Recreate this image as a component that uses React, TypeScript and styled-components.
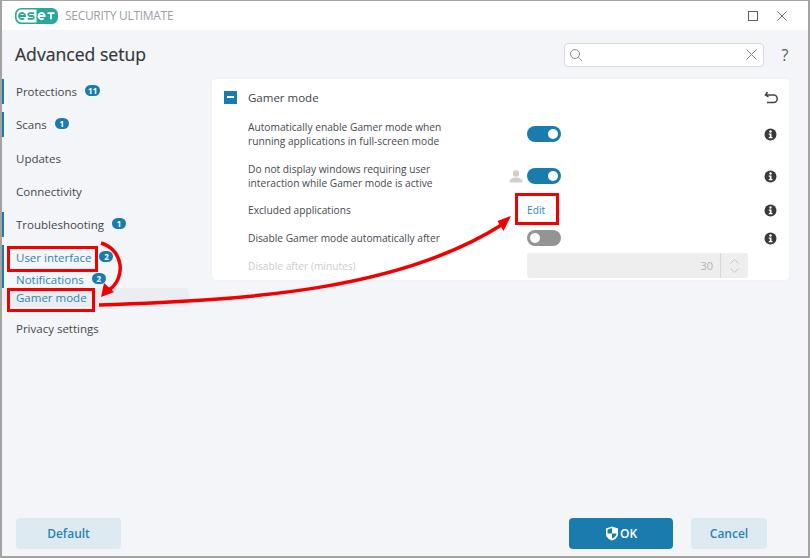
import React from "react";
import styled, { createGlobalStyle } from "styled-components";

const Global = createGlobalStyle`
  html, body { margin: 0; padding: 0; background: #fff; }
  * { box-sizing: border-box; }
`;

const Win = styled.div`
  position: relative;
  width: 810px;
  height: 558px;
  overflow: hidden;
  display: flex;
  flex-direction: column;
  background: #f3f5f8;
  border: 1px solid #a3a3a3;
  border-left-width: 2px;
  border-bottom-width: 2px;
  border-right-width: 2px;
  font-family: "Open Sans", "Noto Sans", sans-serif;
  color: #3d4147;
`;
const TitleBar = styled.header`
  height: 29px;
  flex: none;
  background: #fff;
  display: flex;
  align-items: center;
  padding: 0 21px 0 13px;
  gap: 6px;
`;
const Product = styled.span`
  font-size: 12px;
  color: #9aa0a4;
  letter-spacing: -0.3px;
  flex: 1;
`;
const WinButtons = styled.div`
  display: flex;
  align-items: center;
  gap: 19px;
`;
const HeadRow = styled.div`
  height: 49px;
  flex: none;
  display: flex;
  align-items: center;
  padding: 0 14px 0 13px;
`;
const Title = styled.h1`
  margin: 0 0 2px;
  flex: 1;
  font-size: 17.6px;
  font-weight: 400;
  color: #32363b;
  -webkit-text-stroke: 0.2px #32363b;
`;
const Search = styled.div`
  width: 200px;
  height: 24px;
  background: #fff;
  border: 1px solid #d6d9dc;
  border-radius: 4px;
  display: flex;
  align-items: center;
  justify-content: space-between;
  padding: 0 6px 0 4px;
  margin-right: 12px;
`;
const Help = styled.span`
  font-size: 16px;
  color: #55595e;
  width: 18px;
  text-align: center;
`;
const Body = styled.div`
  flex: 1;
  display: flex;
  align-items: flex-start;
  min-height: 0;
`;
const Nav = styled.nav`
  width: 187px;
  margin-right: 23px;
  flex: none;
  display: flex;
  flex-direction: column;
`;
const NavGroup = styled.div<{ $accent?: boolean }>`
  display: flex;
  flex-direction: column;
  border-left: 2px solid ${(p) => (p.$accent ? "#1a7cae" : "transparent")};
  margin-bottom: 8.3px;
`;
const SubGroup = styled(NavGroup)`
  margin-bottom: 0;
`;
const NavItem = styled.div<{ $blue?: boolean; $h?: number }>`
  height: ${(p) => p.$h ?? 25}px;
  display: flex;
  align-items: center;
  gap: 8px;
  padding-left: 12px;
  font-size: 11.5px;
  font-weight: 500;
  color: ${(p) => (p.$blue ? "#2b85b4" : "#43474d")};
`;
const ActiveItem = styled(NavItem)`
  height: 19px;
  margin-bottom: 9px;
  padding-left: 14px;
  border-radius: 4px;
  background: #ecedf0;
`;
const Badge = styled.span`
  display: inline-flex;
  align-items: center;
  justify-content: center;
  min-width: 14px;
  height: 11px;
  padding: 0 3px;
  margin-top: -2px;
  border-radius: 6px;
  background: #1a7cae;
  color: #fff;
  font-size: 8px;
  font-weight: 700;
`;
const Panel = styled.section`
  width: 577px;
  height: 201px;
  background: #fff;
  border-radius: 4px;
  box-shadow: 0 0 3px rgba(0, 0, 0, 0.04);
  padding: 0 10px 0 12px;
  display: flex;
  flex-direction: column;
`;
const PanelHead = styled.div`
  height: 36px;
  flex: none;
  display: flex;
  align-items: center;
`;
const Collapse = styled.span`
  width: 13px;
  height: 13px;
  background: #1a7cae;
  display: flex;
  align-items: center;
  justify-content: center;
  margin-right: 11px;
  &::after {
    content: "";
    width: 7px;
    height: 2px;
    background: #fff;
  }
`;
const PanelTitle = styled.span`
  flex: 1;
  font-size: 11.5px;
  font-weight: 500;
  color: #3d4147;
`;
const Row = styled.div<{ $h: number; $top?: number }>`
  height: ${(p) => p.$h}px;
  margin-top: ${(p) => p.$top ?? 0}px;
  flex: none;
  display: grid;
  grid-template-columns: 279px 221px 1fr;
  padding-left: 24px;
  align-items: center;
`;
const Label = styled.div<{ $muted?: boolean }>`
  font-size: 10.2px;
  line-height: 14px;
  color: ${(p) => (p.$muted ? "#c9cbce" : "#45494f")};
`;
const Control = styled.div`
  position: relative;
  display: flex;
  align-items: center;
`;
const Toggle = styled.span<{ $on: boolean }>`
  width: 34px;
  height: 16px;
  border-radius: 8px;
  background: ${(p) => (p.$on ? "#1a7cae" : "#949494")};
  display: flex;
  align-items: center;
  justify-content: ${(p) => (p.$on ? "flex-end" : "flex-start")};
  padding: 0 3px;
  &::after {
    content: "";
    width: 10px;
    height: 10px;
    border-radius: 50%;
    background: #fff;
  }
`;
const UserMark = styled.span`
  position: absolute;
  left: -18px;
  top: 2px;
  display: flex;
`;
const EditLink = styled.span`
  font-size: 10.2px;
  color: #2b85b4;
`;
const InfoSlot = styled.div`
  display: flex;
  justify-content: flex-end;
  padding-right: 2px;
`;
const Spin = styled.div`
  width: 221px;
  height: 25px;
  border-radius: 3px;
  background: #eeeeee;
  display: flex;
  align-items: center;
  justify-content: flex-end;
  font-size: 11px;
  color: #b3b3b3;
`;
const SpinArrows = styled.div`
  width: 28px;
  height: 25px;
  margin-left: 7px;
  border-left: 1px solid #d8d8d8;
  display: flex;
  flex-direction: column;
  align-items: center;
  justify-content: center;
  gap: 4px;
`;
const Footer = styled.footer`
  height: 31px;
  margin-bottom: 7px;
  flex: none;
  display: flex;
  align-items: flex-start;
  padding-left: 14px;
  gap: 18px;
`;
const Btn = styled.button<{ $primary?: boolean; $w: number }>`
  width: ${(p) => p.$w}px;
  height: 31px;
  border: 0;
  border-radius: 4px;
  background: ${(p) => (p.$primary ? "#1a7cae" : "#deeaf1")};
  color: ${(p) => (p.$primary ? "#fff" : "#2b85b4")};
  font-family: inherit;
  font-size: 12px;
  font-weight: 600;
  display: flex;
  align-items: center;
  justify-content: center;
  gap: 1px;
  padding: 0;
`;
const Spacer = styled.div`
  width: 412px;
`;
const Overlay = styled.svg`
  position: absolute;
  left: -2px;
  top: -1px;
  pointer-events: none;
`;

const Info = () => (
  <svg width="13" height="13" viewBox="0 0 13 13">
    <circle cx="6.5" cy="6.5" r="6" fill="#3a3a3a" />
    <circle cx="6.5" cy="3.5" r="1.2" fill="#fff" />
    <path d="M4.8 5.5h2.7v3.6h1v1.2H4.8V9.1h1V6.7h-1z" fill="#fff" />
  </svg>
);

const Logo = () => (
  <svg width="44" height="16" viewBox="0 0 44 16" role="img">
    <rect x="0.8" y="0.8" width="41.400" height="14.400" rx="5.500" fill="#fff" stroke="#2aa79b" strokeWidth="1.600" />
    <path d="M21.500 0.800H36.700a5.500 5.500 0 0 1 5.500 5.500v3.400a5.500 5.500 0 0 1-5.500 5.500H21.500z" fill="#2aa79b" />
    <g fill="none" strokeWidth="1.800" strokeLinecap="butt">
      <path stroke="#2aa79b" d="M4 8h6.200a3.100 3.100 0 1 0-1 2.400" />
      <path stroke="#2aa79b" d="M19.200 5.200h-4.500a1.400 1.400 0 0 0 0 2.800h2.700a1.400 1.400 0 0 1 0 2.800h-4.700" />
      <path stroke="#fff" d="M23.500 8h6.200a3.100 3.100 0 1 0-1 2.400" />
      <path stroke="#fff" d="M32.500 5.200h7M36 5.200v6" />
    </g>
  </svg>
);

const Arrows = () => (
  <Overlay width="810" height="558" viewBox="0 0 810 558" fill="none">
    <g stroke="#f00000" strokeWidth="3" fill="none">
      <rect x="8.500" y="247.500" width="88" height="23" />
      <rect x="8.500" y="289.500" width="85" height="21" />
      <rect x="516.500" y="194.500" width="41" height="29" />
    </g>
    <path d="M101 243C124 250 126 278 109 290" stroke="#f00000" strokeWidth="3.500" />
    <path d="M101 297l3-14 10 9z" fill="#f00000" />
    <path d="M99 305C250 300 400 290 503 224" stroke="#f00000" strokeWidth="3.500" />
    <path d="M511 216l-7.500 15-6-10z" fill="#f00000" />
  </Overlay>
);

export default function App() {
  return (
    <Win>
      <Global />
      <TitleBar>
        <Logo />
        <Product>SECURITY ULTIMATE</Product>
        <WinButtons>
          <svg width="10" height="10" viewBox="0 0 10 10" fill="none" stroke="#5f5f5f">
            <rect x="0.500" y="0.500" width="9" height="9" />
          </svg>
          <svg width="10" height="10" viewBox="0 0 10 10" fill="none" stroke="#6a6a6a">
            <path d="M0.500 0.500l9 9M9.500 0.500l-9 9" />
          </svg>
        </WinButtons>
      </TitleBar>
      <HeadRow>
        <Title>Advanced setup</Title>
        <Search>
          <svg width="14" height="14" viewBox="0 0 14 14" fill="none" stroke="#8a8a8a" strokeWidth="1">
            <circle cx="6" cy="6" r="4.500" />
            <path d="M9.300 9.300L13 13" />
          </svg>
          <svg width="11" height="11" viewBox="0 0 11 11" fill="none" stroke="#7d7d7d">
            <path d="M0.500 0.500l10 10M10.500 0.500l-10 10" />
          </svg>
        </Search>
        <Help>?</Help>
      </HeadRow>
      <Body>
        <Nav>
          <NavGroup $accent>
            <NavItem>Protections <Badge>11</Badge></NavItem>
          </NavGroup>
          <NavGroup $accent>
            <NavItem>Scans <Badge>1</Badge></NavItem>
          </NavGroup>
          <NavGroup>
            <NavItem>Updates</NavItem>
          </NavGroup>
          <NavGroup>
            <NavItem>Connectivity</NavItem>
          </NavGroup>
          <NavGroup $accent>
            <NavItem>Troubleshooting <Badge>1</Badge></NavItem>
          </NavGroup>
          <SubGroup $accent>
            <NavItem $blue>User interface <Badge>2</Badge></NavItem>
            <NavItem $blue $h={18}>Notifications <Badge>2</Badge></NavItem>
          </SubGroup>
          <ActiveItem $blue>Gamer mode</ActiveItem>
          <NavGroup>
            <NavItem>Privacy settings</NavItem>
          </NavGroup>
        </Nav>
        <Panel>
          <PanelHead>
            <Collapse />
            <PanelTitle>Gamer mode</PanelTitle>
            <svg width="15" height="15" viewBox="0 0 15 15" fill="none" stroke="#3a4450" strokeWidth="1.500">
              <path d="M3.500 2L1.500 5l3 2M2 5h7.500a3.700 3.700 0 0 1 0 7.500H3" />
            </svg>
          </PanelHead>
          <Row $h={28} $top={5}>
            <Label>Automatically enable Gamer mode when<br />running applications in full-screen mode</Label>
            <Control><Toggle $on /></Control>
            <InfoSlot><Info /></InfoSlot>
          </Row>
          <Row $h={28} $top={14}>
            <Label>Do not display windows requiring user<br />interaction while Gamer mode is active</Label>
            <Control>
              <UserMark>
                <svg width="14" height="13" viewBox="0 0 14 13" fill="#cfcfcf">
                  <circle cx="7" cy="3.500" r="3.200" />
                  <path d="M0.500 12.500c0-3.500 2.500-5 6.500-5s6.500 1.500 6.500 5z" />
                </svg>
              </UserMark>
              <Toggle $on />
            </Control>
            <InfoSlot><Info /></InfoSlot>
          </Row>
          <Row $h={20} $top={10}>
            <Label>Excluded applications</Label>
            <Control><EditLink>Edit</EditLink></Control>
            <InfoSlot><Info /></InfoSlot>
          </Row>
          <Row $h={20} $top={8}>
            <Label>Disable Gamer mode automatically after</Label>
            <Control><Toggle $on={false} /></Control>
            <InfoSlot><Info /></InfoSlot>
          </Row>
          <Row $h={25} $top={5}>
            <Label $muted>Disable after (minutes)</Label>
            <Control>
              <Spin>
                30
                <SpinArrows>
                  <svg width="9" height="5" viewBox="0 0 9 5" fill="none" stroke="#c4c4c4"><path d="M0.500 4.500l4-4 4 4" /></svg>
                  <svg width="9" height="5" viewBox="0 0 9 5" fill="none" stroke="#c4c4c4"><path d="M0.500 0.500l4 4 4-4" /></svg>
                </SpinArrows>
              </Spin>
            </Control>
          </Row>
        </Panel>
      </Body>
      <Footer>
        <Btn $w={105}>Default</Btn>
        <Spacer />
        <Btn $primary $w={104}>
          <svg width="14" height="15" viewBox="0 0 14 15">
            <path d="M7 0.500l6 2v5c0 3.500-2.500 5.800-6 7-3.500-1.200-6-3.500-6-7v-5z" fill="#fff" />
            <path d="M7 2v5.500H2.500V3.500zM7 7.500h4.500c-.2 2.500-2 4-4.500 5z" fill="#1a7cae" />
          </svg>
          OK
        </Btn>
        <Btn $w={76}>Cancel</Btn>
      </Footer>
      <Arrows />
    </Win>
  );
}
